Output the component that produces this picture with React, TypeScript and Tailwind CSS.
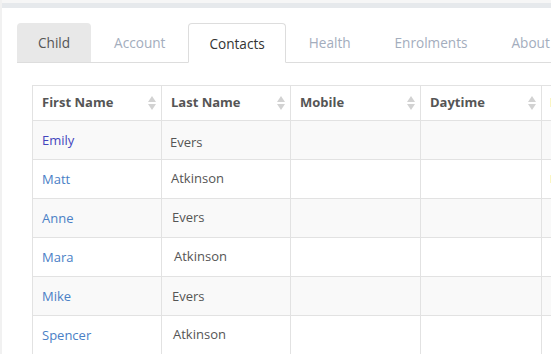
import { useState } from 'react';

const tabs = ['Child', 'Account', 'Contacts', 'Health', 'Enrolments', 'About'];

const contacts = [
  { first: 'Emily', last: 'Evers', pad: 'pl-[8px] pt-[5px]', visited: true },
  { first: 'Matt', last: 'Atkinson', pad: 'pl-[9px]' },
  { first: 'Anne', last: 'Evers', pad: 'pl-[10px]' },
  { first: 'Mara', last: 'Atkinson', pad: 'pl-[12px]' },
  { first: 'Mike', last: 'Evers', pad: 'pl-[10px] pt-[2px]' },
  { first: 'Spencer', last: 'Atkinson', pad: 'pl-[11px]' },
];

function SortIcon() {
  return (
    <svg width="8" height="14" viewBox="0 0 8 14" className="shrink-0">
      <path d="M4 0 L8 6 L0 6 Z" fill="#d2d2d2" />
      <path d="M0 8 L8 8 L4 14 Z" fill="#d2d2d2" />
    </svg>
  );
}

function App() {
  const [active] = useState('Contacts');

  return (
    <div className="flex w-[551px] h-[354px] overflow-hidden bg-white text-[13px] font-['Open_Sans',sans-serif]">
      <div className="w-[2px] shrink-0 bg-[#f1f1f1]" />
      <div className="flex-1 min-w-0">
        <div className="h-[3px] bg-[#f6f6f6]" />
        <div className="h-[5px] bg-[#e6e9ec]" />

        {/* tabs */}
        <div className="ml-[15px] mt-[15px] flex border-b border-[#dddddd] h-[40px] text-[13.6px]">
          {tabs.map((t) => {
            const isActive = t === active;
            const isChild = t === 'Child';
            return (
              <div
                key={t}
                className={
                  'shrink-0 mr-[2px] pt-[2px] flex items-center rounded-t-[4px] whitespace-nowrap ' +
                  (isActive
                    ? 'bg-white border border-[#dddddd] border-b-white -mb-px text-[#333333] px-[20px]'
                    : isChild
                    ? 'bg-[#e8e8e8] text-[#555555] px-[21px]'
                    : 'text-[#a3adbd] px-[21px]')
                }
              >
                {t}
              </div>
            );
          })}
        </div>

        {/* contacts table */}
        <div className="ml-[30px] mt-[22px]">
          <table className="border-collapse table-fixed w-[640px]">
            <colgroup>
              <col className="w-[129px]" />
              <col className="w-[129px]" />
              <col className="w-[130px]" />
              <col className="w-[121px]" />
              <col className="w-[131px]" />
            </colgroup>
            <thead>
              <tr className="h-[35px]">
                {['First Name', 'Last Name', 'Mobile', 'Daytime'].map((h) => (
                  <th key={h} className="border border-[#e2e2e2] pl-[9px] pr-[5px] text-left font-bold text-[#555555]">
                    <div className="flex items-center justify-between">
                      <span>{h}</span>
                      <SortIcon />
                    </div>
                  </th>
                ))}
                <th className="border border-[#e2e2e2] pl-[8px] text-left">
                  <span className="inline-block w-[4px] h-[9px] mt-[4px] bg-[#fbf6c4]" />
                </th>
              </tr>
            </thead>
            <tbody>
              {contacts.map((c, i) => (
                <tr key={c.first} className={'h-[39px] ' + (i % 2 === 0 ? 'bg-[#f9f9f9]' : 'bg-white')}>
                  <td className="border border-[#e2e2e2] pl-[9px] pt-[2px]">
                    <a href="#" className={c.visited ? 'text-[#4445bd]' : 'text-[#4a80c6]'}>
                      {c.first}
                    </a>
                  </td>
                  <td className={'border border-[#e2e2e2] text-[#555555] ' + c.pad}>{c.last}</td>
                  <td className="border border-[#e2e2e2]" />
                  <td className="border border-[#e2e2e2]" />
                  <td className="border border-[#e2e2e2] pl-[8px]">
                    {i === 1 && <span className="inline-block w-[4px] h-[8px] bg-[#fbf6c4]" />}
                  </td>
                </tr>
              ))}
            </tbody>
          </table>
        </div>
      </div>
    </div>
  );
}

export default App;
